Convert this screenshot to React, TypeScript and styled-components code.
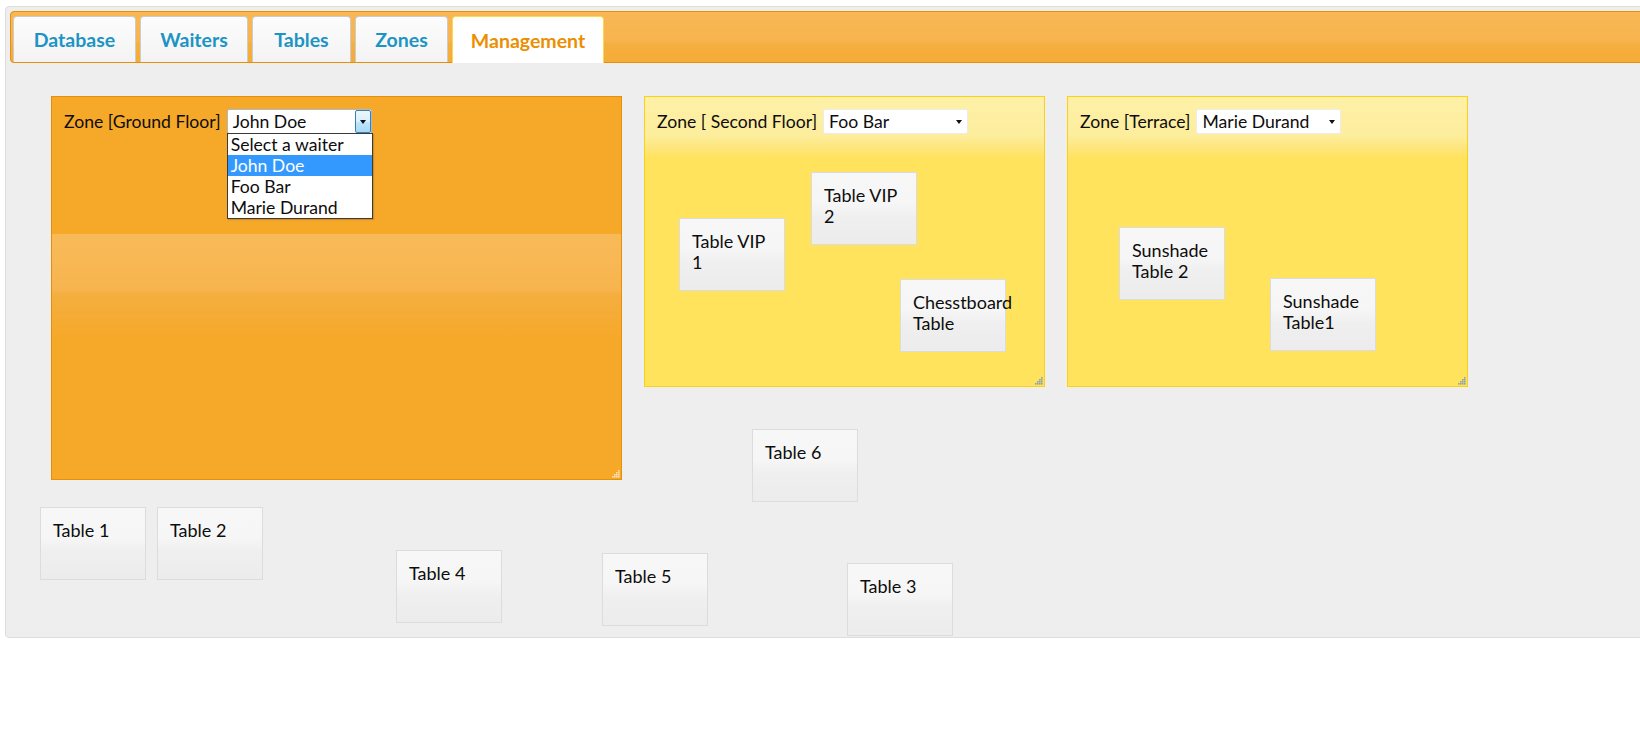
import React from 'react';
import styled, { createGlobalStyle, css } from 'styled-components';

const GlobalStyle = createGlobalStyle`
  html, body {
    margin: 0;
    padding: 0;
    background: #ffffff;
    overflow: hidden;
  }
  body {
    font-family: Lato, "Liberation Sans", sans-serif;
  }
`;

const FONT = `Lato, "Liberation Sans", Arial, sans-serif`;

const Page = styled.div`
  padding: 6px 0 0 5px;
`;

const TabsWidget = styled.div`
  width: 1660px;
  box-sizing: border-box;
  border: 1px solid #dddddd;
  border-radius: 4px;
  background: #eeeeee;
  padding: 4px;
  font-family: ${FONT};
  font-size: 18px;
  color: #0d0d0d;
`;

const glossWave = css`
  linear-gradient(
    to bottom,
    #f8ba58 0%,
    #f8b753 30%,
    #f7b44e 54%,
    #f5af40 57%,
    #f5ac37 75%,
    #f6a828 100%
  )
`;

const TabBar = styled.ul`
  display: flex;
  align-items: flex-end;
  gap: 4px;
  margin: 0;
  padding: 4px 0 0 2px;
  list-style: none;
  height: 52px;
  box-sizing: border-box;
  border: 1px solid #e78f08;
  border-radius: 4px;
  background: ${glossWave} 0 50% / 100% 100px repeat-x, #f6a828;
`;

const Tab = styled.li<{ $active?: boolean; $w: number }>`
  box-sizing: border-box;
  width: ${(p) => p.$w}px;
  height: ${(p) => (p.$active ? 47 : 46)}px;
  margin-bottom: ${(p) => (p.$active ? -1 : 0)}px;
  position: relative;
  display: flex;
  align-items: center;
  justify-content: center;
  border: 1px solid ${(p) => (p.$active ? '#fbd850' : '#cccccc')};
  border-bottom: 0;
  border-radius: 4px 4px 0 0;
  background: ${(p) =>
    p.$active ? '#ffffff' : 'linear-gradient(to bottom, #fcfcfc 0%, #f8f8f8 50%, #f3f3f3 100%)'};
  color: ${(p) => (p.$active ? '#eb8f00' : '#1c94c4')};
  font-weight: 700;
  font-size: 19.5px;
  cursor: pointer;
`;

const Panel = styled.div`
  position: relative;
  height: 570px;
  box-sizing: border-box;
  padding: 33px 0 0 41px;
  display: flex;
  align-items: flex-start;
  gap: 22px;
`;

const Zone = styled.div<{ $variant: 'active' | 'highlight'; $w: number; $h: number }>`
  position: relative;
  flex: none;
  box-sizing: border-box;
  width: ${(p) => p.$w}px;
  height: ${(p) => p.$h}px;
  padding: 12px;
  ${(p) =>
    p.$variant === 'active'
      ? css`
          border: 1px solid #e78f08;
          background: ${glossWave} 0 calc(50% - 2px) / 100% 104px no-repeat, #f6a828;
        `
      : css`
          border: 1px solid #fcd113;
          background: linear-gradient(
                to bottom,
                #fef0a6 0%,
                #fdee9e 38%,
                #fee57a 52%,
                #ffe35c 62%,
                #ffe35c 100%
              )
              0 0 / 100% 100px no-repeat,
            #ffe35c;
        `}
`;

const ZoneHeader = styled.div`
  position: relative;
  z-index: 5;
  display: flex;
  align-items: center;
  gap: 6px;
  font-size: 17.6px;
  line-height: 21px;
`;

const ZoneLabel = styled.span`
  white-space: nowrap;
`;

const SelectBox = styled.div<{ $open?: boolean }>`
  position: relative;
  box-sizing: border-box;
  width: 145px;
  height: 25px;
  display: flex;
  align-items: center;
  padding-left: 5px;
  background: #ffffff;
  border: 1px solid ${(p) => (p.$open ? '#a9b9c9' : '#ececec')};
  border-radius: 2px;
  white-space: nowrap;
`;

const ArrowButton = styled.span<{ $open?: boolean }>`
  position: absolute;
  top: 0;
  right: 0;
  bottom: 0;
  width: 16px;
  display: flex;
  align-items: center;
  justify-content: center;
  box-sizing: border-box;
  ${(p) =>
    p.$open &&
    css`
      border: 1px solid #3c7fb1;
      border-radius: 2px;
      background: linear-gradient(to bottom, #eaf6fd 0%, #d9f0fc 50%, #bee6fd 51%, #a7d9f5 100%);
    `}
  &::after {
    content: '';
    width: 0;
    height: 0;
    border-left: 3.5px solid transparent;
    border-right: 3.5px solid transparent;
    border-top: 4px solid #111;
  }
`;

const DropList = styled.ul`
  position: absolute;
  top: 100%;
  left: -1px;
  width: 146px;
  box-sizing: border-box;
  margin: 0;
  padding: 0;
  list-style: none;
  background: #ffffff;
  border: 1px solid #3a3a3a;
  box-shadow: 1px 1px 1px rgba(0, 0, 0, 0.15);
`;

const DropItem = styled.li<{ $selected?: boolean }>`
  height: 21px;
  line-height: 21px;
  padding: 0 3px;
  white-space: nowrap;
  background: ${(p) => (p.$selected ? '#3399ff' : 'transparent')};
  color: ${(p) => (p.$selected ? '#ffffff' : 'inherit')};
`;

const TableCard = styled.div<{ $x: number; $y: number }>`
  position: absolute;
  left: ${(p) => p.$x}px;
  top: ${(p) => p.$y}px;
  box-sizing: border-box;
  width: 106px;
  height: 73px;
  padding: 12px;
  border: 1px solid #dcdcdc;
  background: linear-gradient(
    to bottom,
    #f7f7f7 0%,
    #f6f6f6 42%,
    #efefef 62%,
    #ececec 100%
  );
  line-height: 21px;
`;

const Grip = styled.svg`
  position: absolute;
  right: 1px;
  bottom: 1px;
`;

type TableItem = { name: string; x: number; y: number };

type ZoneData = {
  label: string;
  waiter: string;
  open?: boolean;
  variant: 'active' | 'highlight';
  w: number;
  h: number;
  tables: TableItem[];
};

const waiters = ['Select a waiter', 'John Doe', 'Foo Bar', 'Marie Durand'];

const zones: ZoneData[] = [
  { label: 'Zone [Ground Floor]', waiter: 'John Doe', open: true, variant: 'active', w: 571, h: 384, tables: [] },
  {
    label: 'Zone [ Second Floor]',
    waiter: 'Foo Bar',
    variant: 'highlight',
    w: 401,
    h: 291,
    tables: [
      { name: 'Table VIP 1', x: 34, y: 121 },
      { name: 'Table VIP 2', x: 166, y: 75 },
      { name: 'Chesstboard Table', x: 255, y: 182 },
    ],
  },
  {
    label: 'Zone [Terrace]',
    waiter: 'Marie Durand',
    variant: 'highlight',
    w: 401,
    h: 291,
    tables: [
      { name: 'Sunshade Table 2', x: 51, y: 130 },
      { name: 'Sunshade Table1', x: 202, y: 181 },
    ],
  },
];

const freeTables: TableItem[] = [
  { name: 'Table 1', x: 30, y: 444 },
  { name: 'Table 2', x: 147, y: 444 },
  { name: 'Table 4', x: 386, y: 487 },
  { name: 'Table 5', x: 592, y: 490 },
  { name: 'Table 3', x: 837, y: 500 },
  { name: 'Table 6', x: 742, y: 366 },
];

const tabs = [
  { label: 'Database', w: 123 },
  { label: 'Waiters', w: 108 },
  { label: 'Tables', w: 99 },
  { label: 'Zones', w: 93 },
  { label: 'Management', w: 152, active: true },
];

function ResizeGrip({ color }: { color: string }) {
  const dots = [
    [7, 1],
    [5, 3],
    [7, 3],
    [3, 5],
    [5, 5],
    [7, 5],
    [1, 7],
    [3, 7],
    [5, 7],
    [7, 7],
  ];
  return (
    <Grip width="9" height="9" viewBox="0 0 9 9">
      {dots.map(([x, y], i) => (
        <rect key={i} x={x} y={y} width="1.6" height="1.6" fill={color} />
      ))}
    </Grip>
  );
}

function WaiterSelect({ value, open }: { value: string; open?: boolean }) {
  return (
    <SelectBox $open={open}>
      {value}
      <ArrowButton $open={open} />
      {open && (
        <DropList>
          {waiters.map((w) => (
            <DropItem key={w} $selected={w === value}>
              {w}
            </DropItem>
          ))}
        </DropList>
      )}
    </SelectBox>
  );
}

export default function App() {
  return (
    <>
      <GlobalStyle />
      <Page>
        <TabsWidget>
          <TabBar>
            {tabs.map((t) => (
              <Tab key={t.label} $w={t.w} $active={t.active}>
                {t.label}
              </Tab>
            ))}
          </TabBar>
          <Panel>
            {zones.map((z) => (
              <Zone key={z.label} $variant={z.variant} $w={z.w} $h={z.h}>
                <ZoneHeader>
                  <ZoneLabel>{z.label}</ZoneLabel>
                  <WaiterSelect value={z.waiter} open={z.open} />
                </ZoneHeader>
                {z.tables.map((t) => (
                  <TableCard key={t.name} $x={t.x} $y={t.y}>
                    {t.name}
                  </TableCard>
                ))}
                <ResizeGrip color={z.variant === 'active' ? '#fde2b8' : '#8aa2b4'} />
              </Zone>
            ))}
            {freeTables.map((t) => (
              <TableCard key={t.name} $x={t.x} $y={t.y}>
                {t.name}
              </TableCard>
            ))}
          </Panel>
        </TabsWidget>
      </Page>
    </>
  );
}
